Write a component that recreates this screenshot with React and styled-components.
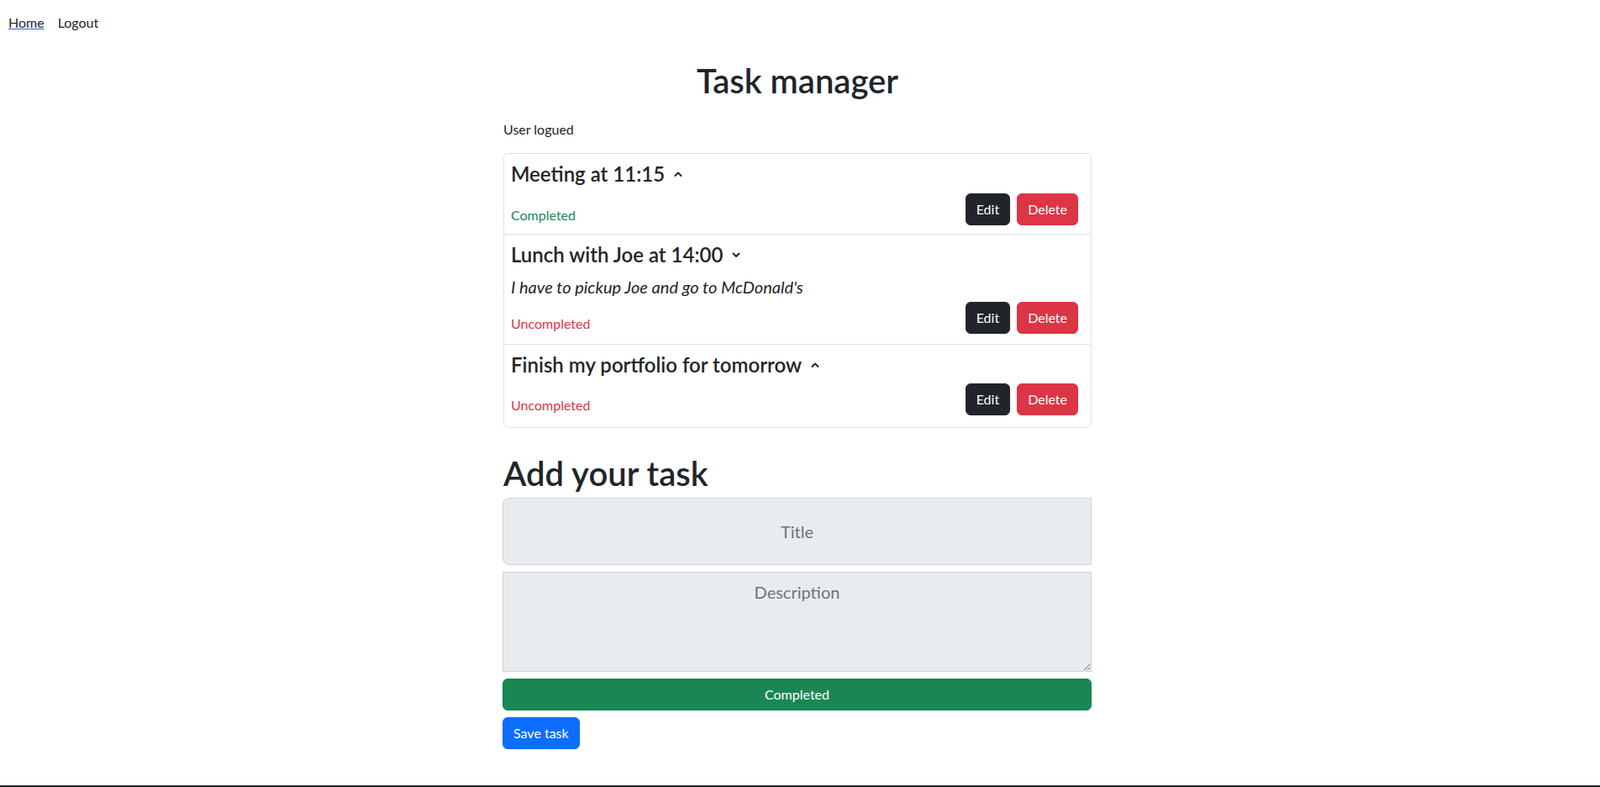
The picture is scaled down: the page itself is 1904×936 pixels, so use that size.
import React from 'react'
import styled, { createGlobalStyle } from 'styled-components'

const GlobalStyle = createGlobalStyle`
  * { box-sizing: border-box; }
  html, body { margin: 0; padding: 0; }
  body {
    font-family: Lato, "Noto Sans", sans-serif;
    font-size: 16px;
    line-height: 1.5;
    color: #212529;
    background: #fff;
  }
`

const tasks = [
  { id: 1, title: 'Meeting at 11:15', open: false, completed: true },
  {
    id: 2,
    title: 'Lunch with Joe at 14:00',
    open: true,
    description: "I have to pickup Joe and go to McDonald's",
    completed: false,
  },
  { id: 3, title: 'Finish my portfolio for tomorrow', open: false, completed: false },
]

const Chevron = ({ up }) => (
  <svg width="12" height="12" viewBox="0 0 12 12" fill="none">
    <path
      d={up ? 'M2.5 8 L6 4.5 L9.5 8' : 'M2.5 4.5 L6 8 L9.5 4.5'}
      stroke="#212529"
      strokeWidth="2"
      strokeLinecap="round"
      strokeLinejoin="round"
    />
  </svg>
)

export default class App extends React.Component {
  render() {
    return (
      <Page>
        <GlobalStyle />
        <Nav>
          <NavLink href="#" active>Home</NavLink>
          <NavLink href="#">Logout</NavLink>
        </Nav>
        <Main>
          <PageTitle>Task manager</PageTitle>
          <UserInfo>User logued</UserInfo>
          <TaskList>
            {tasks.map(task => (
              <TaskItem key={task.id}>
                <TaskTitle>
                  {task.title}
                  <Chevron up={!task.open} />
                </TaskTitle>
                {task.open && <TaskDescription>{task.description}</TaskDescription>}
                <TaskFooter>
                  <Status completed={task.completed}>
                    {task.completed ? 'Completed' : 'Uncompleted'}
                  </Status>
                  <Actions>
                    <Button variant="dark">Edit</Button>
                    <Button variant="danger">Delete</Button>
                  </Actions>
                </TaskFooter>
              </TaskItem>
            ))}
          </TaskList>
          <FormTitle>Add your task</FormTitle>
          <Form onSubmit={e => e.preventDefault()}>
            <TitleInput placeholder="Title" />
            <DescriptionInput placeholder="Description" />
            <Button variant="success" block type="button">Completed</Button>
            <Button variant="primary" type="submit">Save task</Button>
          </Form>
        </Main>
        <Footer />
      </Page>
    )
  }
}

const Page = styled.div`
display:flex;
flex-direction:column;
min-height:100vh;
`

const Nav = styled.nav`
display:flex;
gap:16px;
padding:15px 10px 0;
`

const NavLink = styled.a`
color:#212529;
text-decoration:${props => props.active ? 'underline' : 'none'};
text-decoration-color:#3b5bdb;
`

const Main = styled.main`
width:700px;
margin:33px 0 0 calc(50% - 353px);
display:flex;
flex-direction:column;
`

const PageTitle = styled.h1`
margin:0 0 22px;
font-size:40px;
font-weight:600;
line-height:1.2;
text-align:center;
`

const UserInfo = styled.p`
margin:0 0 16px;
`

const TaskList = styled.ul`
list-style:none;
margin:0;
padding:0;
border:1px solid #dee2e6;
border-radius:6px;
`

const TaskItem = styled.li`
padding:10px 8px 12px;
border-bottom:1px solid #dee2e6;
&:first-child { padding-bottom:10px; }
&:last-child { border-bottom:0; padding-bottom:14px; }
`

const TaskTitle = styled.h4`
display:flex;
align-items:center;
gap:10px;
margin:0 0 8px;
font-size:24px;
font-weight:600;
line-height:1.2;
`

const TaskDescription = styled.p`
margin:0 0 3px;
font-size:20px;
font-style:italic;
font-weight:400;
`

const TaskFooter = styled.div`
display:flex;
justify-content:space-between;
align-items:flex-end;
padding-right:7px;
`

const Status = styled.span`
color:${props => props.completed ? '#198754' : '#dc3545'};
`

const Actions = styled.div`
display:flex;
gap:8px;
`

const colors = {
  dark: '#212529',
  danger: '#dc3545',
  success: '#198754',
  primary: '#0d6efd',
}

const Button = styled.button`
display:${props => props.block ? 'block' : 'inline-block'};
width:${props => props.block ? '100%' : 'auto'};
align-self:flex-start;
padding:6px 12px;
font-family:inherit;
font-size:16px;
line-height:24px;
color:#fff;
background:${props => colors[props.variant]};
border:1px solid ${props => colors[props.variant]};
border-radius:6px;
cursor:pointer;
`

const FormTitle = styled.h1`
margin:30px 0 5px;
font-size:40px;
font-weight:600;
line-height:1.2;
`

const Form = styled.form`
display:flex;
flex-direction:column;
gap:8px;
margin-left:-1px;
`

const TitleInput = styled.input`
height:80px;
padding:0 16px;
font-family:inherit;
font-size:20px;
text-align:center;
color:#212529;
background:#e9ecef;
border:1px solid #ced4da;
border-radius:8px 0 0 8px;
&::placeholder { color:#6c757d; }
`

const DescriptionInput = styled.textarea`
height:119px;
padding:8px 16px;
font-family:inherit;
font-size:20px;
line-height:1.5;
text-align:center;
color:#212529;
background:#e9ecef;
border:1px solid #ced4da;
border-radius:0;
&::placeholder { color:#6c757d; }
`

const Footer = styled.footer`
margin-top:auto;
height:2px;
background:#212529;
`
